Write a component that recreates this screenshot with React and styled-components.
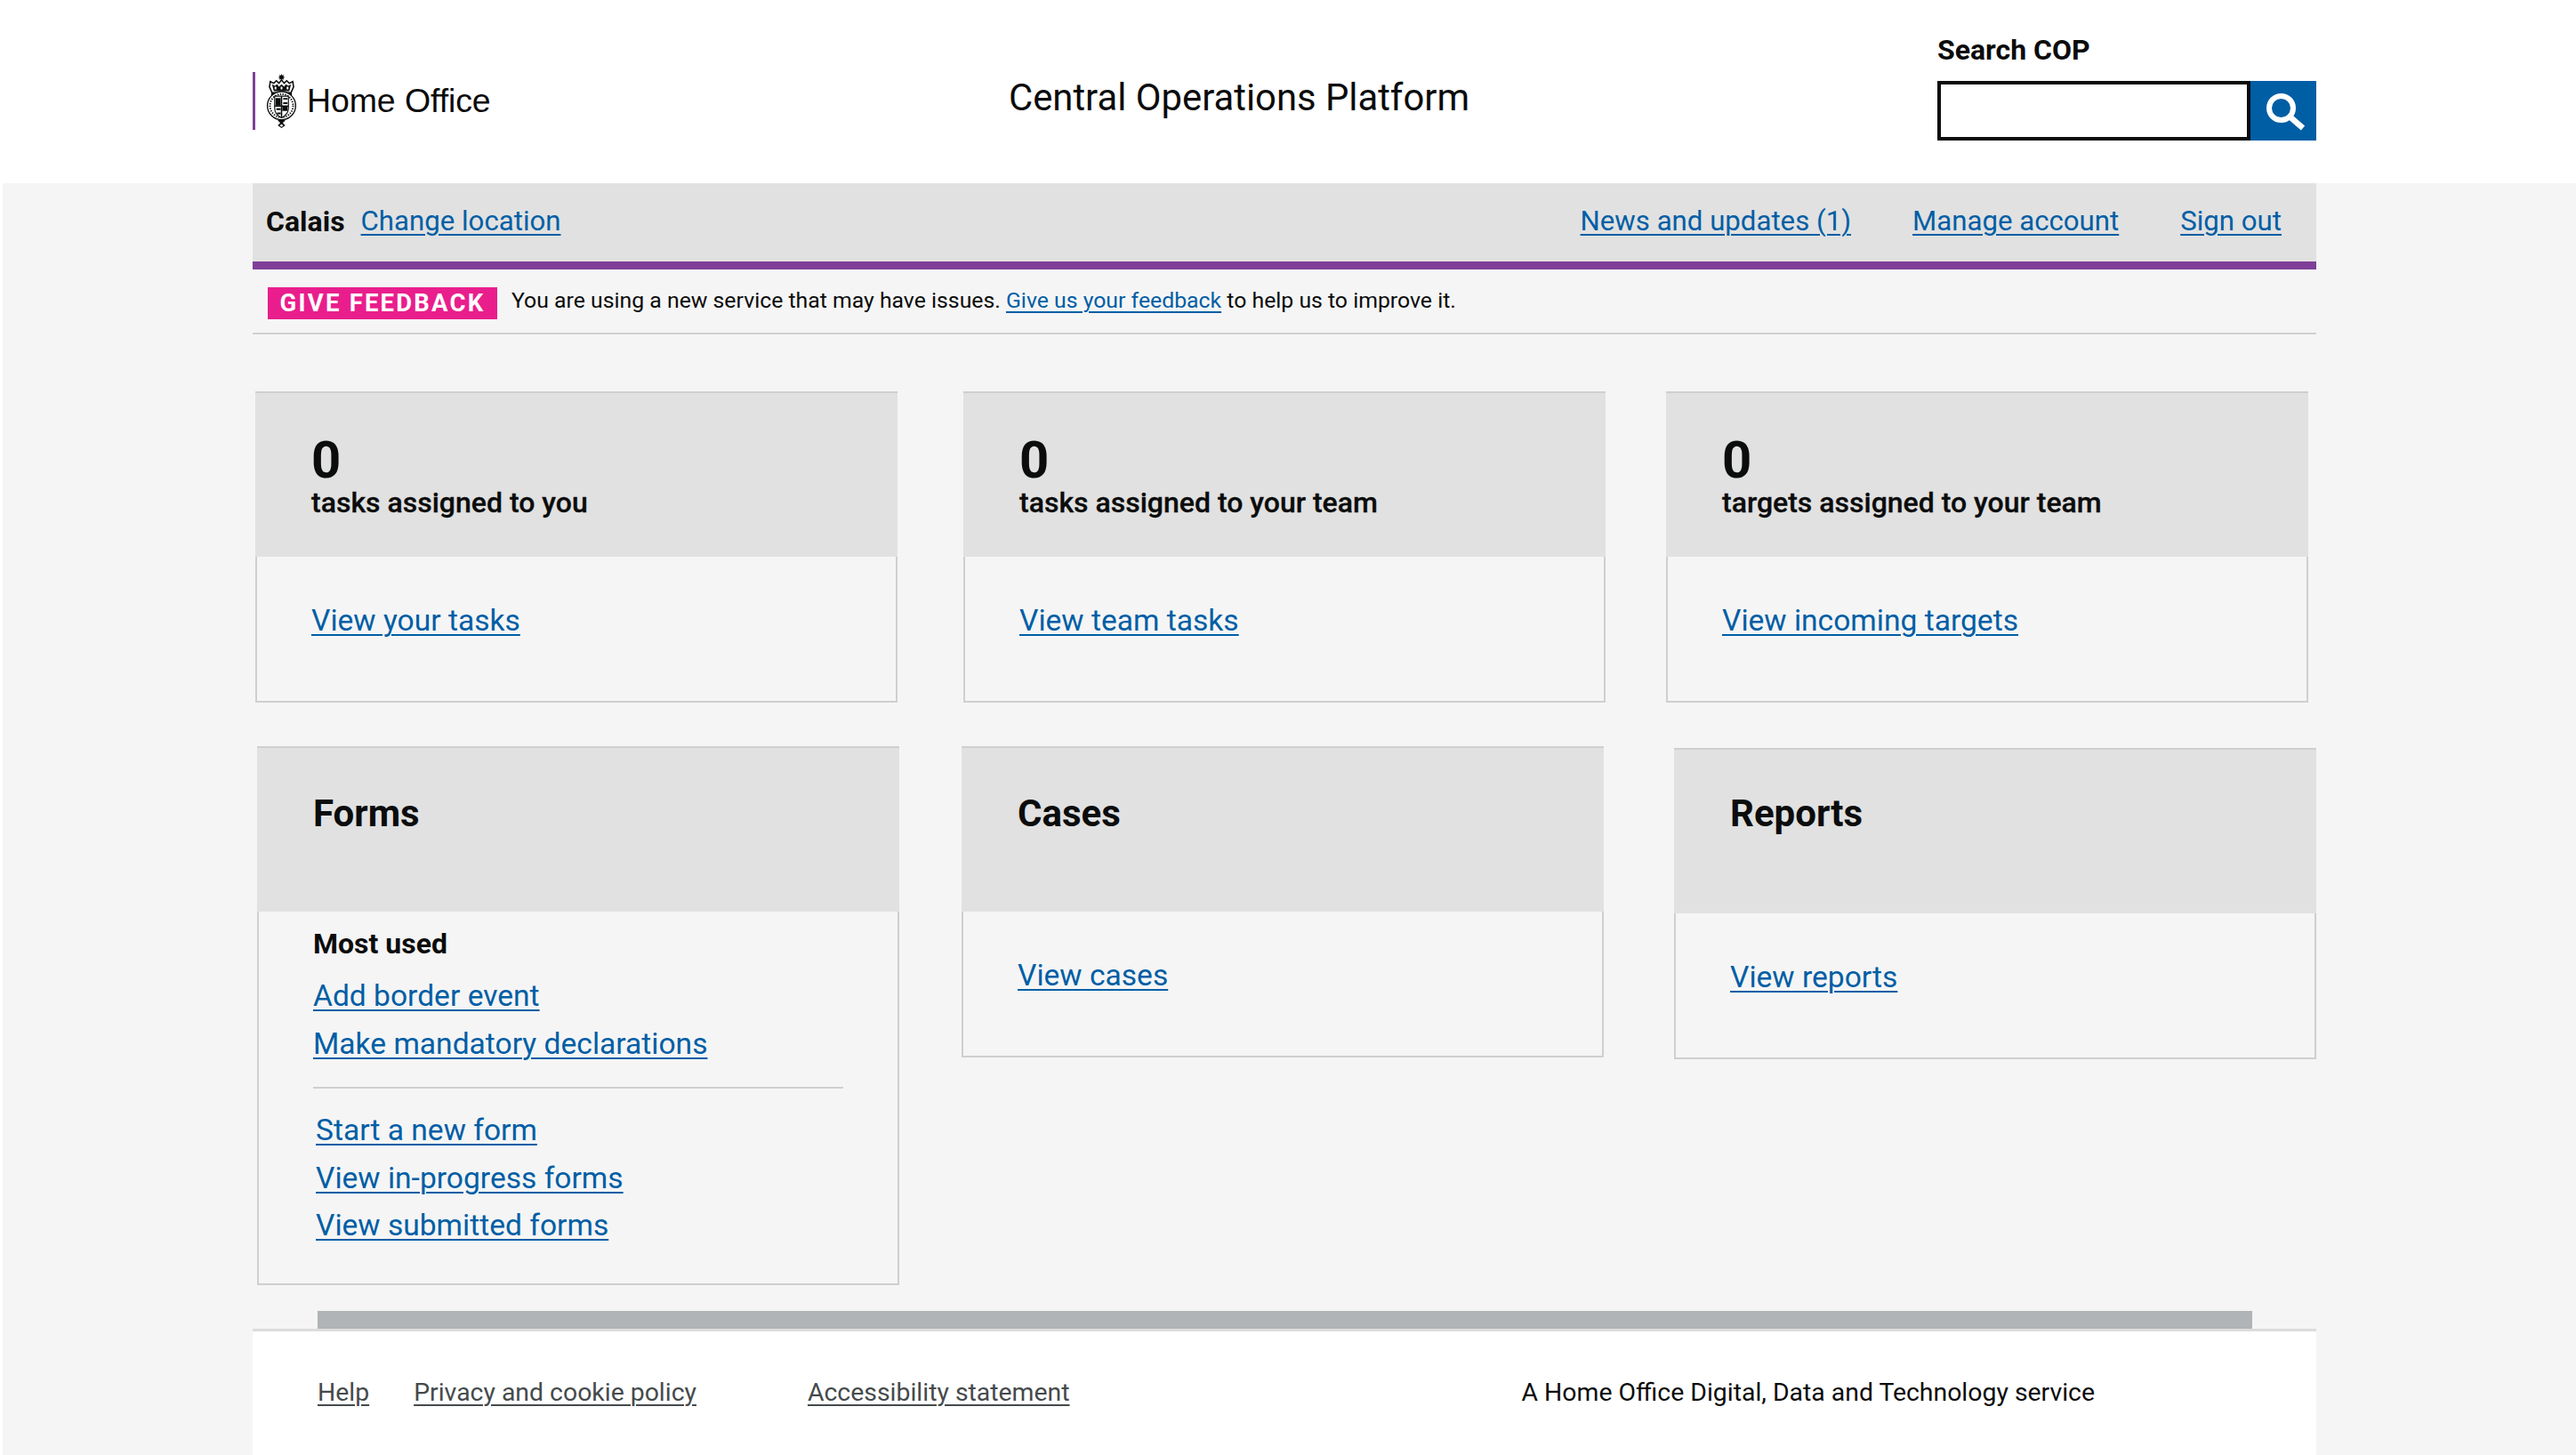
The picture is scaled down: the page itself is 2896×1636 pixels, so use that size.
import React from "react";
import styled, { createGlobalStyle } from "styled-components";

const Global = createGlobalStyle`
  html, body { margin: 0; padding: 0; background: #fff; }
  body { font-family: Roboto, "Liberation Sans", sans-serif; color: #0b0c0c; }
  * { box-sizing: border-box; }
`;
const Page = styled.div`
  width: 2896px; height: 1636px; overflow: hidden; display: flex; flex-direction: column;
`;
const Header = styled.header`
  height: 206px; width: 2320px; margin-left: 284px; display: flex; align-items: flex-start; flex: none;
`;
const Logo = styled.div`
  width: 850px; height: 65px; margin-top: 81px; display: flex; align-items: center;
  border-left: 3px solid #7f3f98; padding-left: 11px;
`;
const Crest = styled.svg`
  width: 37px; height: 62px; flex: none;
`;
const LogoText = styled.span`
  font-family: "Liberation Sans", Arial, sans-serif; font-size: 37.5px; margin-left: 10px; color: #0b0c0c; letter-spacing: -0.1px;
`;
const Title = styled.div`
  font-size: 41.8px; line-height: 56px; margin-top: 82px; color: #0b0c0c;
`;
const Search = styled.form`
  margin-left: auto; width: 426px; padding-top: 36px;
`;
const SearchLabel = styled.label`
  display: block; font-size: 32px; font-weight: 700; line-height: 40px; margin-bottom: 15px;
`;
const SearchRow = styled.div`
  display: flex; height: 67px;
`;
const SearchInput = styled.input`
  width: 352px; height: 67px; border: 4px solid #0b0c0c; background: #fff; padding: 0; outline: 0; border-radius: 0;
`;
const SearchButton = styled.button`
  width: 74px; height: 67px; background: #005ea5; border: 0; padding: 0; display: flex; align-items: center; justify-content: center;
`;
const Body = styled.div`
  flex: 1; margin-left: 3px; padding-left: 281px; background: #f5f5f5; display: flex; flex-direction: column;
`;
const Column = styled.div`
  width: 2320px; flex: 1; display: flex; flex-direction: column;
`;
const Nav = styled.nav`
  height: 97px; background: #e1e1e1; border-bottom: 9px solid #7f3f98; display: flex; align-items: center; padding: 0 39px 3px 15px; flex: none;
`;
const Location = styled.strong`
  font-weight: 700; font-size: 32px; margin-right: 18px;
`;
const Link = styled.a`
  color: #005ea5; text-decoration: underline; text-decoration-thickness: 2px; text-underline-offset: 4px; font-size: ${p => p.$size || 33.6}px; font-weight: 400;
`;
const NavLinks = styled.div`
  margin-left: auto; display: flex; gap: 69px;
`;
const Feedback = styled.div`
  height: 73px; border-bottom: 2px solid #d0d0d0; padding: 20px 0 0 17px; display: flex; align-items: flex-start; flex: none;
`;
const Tag = styled.span`
  background: #e91e8c; color: #fff; font-weight: 700; font-size: 27.5px; height: 36px; width: 258px; padding-bottom: 2px; letter-spacing: 2.2px; display: flex; align-items: center; justify-content: center; margin-right: 16px; flex: none;
`;
const FeedbackText = styled.p`
  margin: 0; font-size: 24.8px; line-height: 30px;
`;
const Main = styled.main`
  flex: 1; padding-top: 64px; display: flex; flex-direction: column;
`;
const Row = styled.div`
  display: flex; align-items: flex-start; padding-left: ${p => p.$left}px; margin-bottom: ${p => p.$bottom}px;
`;
const Card = styled.section`
  width: 722px; height: ${p => p.$height}px; border: 2px solid #cfcfcf; flex: none; margin-right: ${p => p.$gap || 0}px; margin-top: ${p => p.$top || 0}px; display: flex; flex-direction: column;
`;
const CardHead = styled.div`
  height: 184px; background: #e1e1e1; margin: 0 -2px; padding: ${p => p.$pad}px 0 0 63px; flex: none;
`;
const Count = styled.div`
  font-size: 58px; font-weight: 700; line-height: 60px;
`;
const CountLabel = styled.div`
  font-size: 32px; font-weight: 500; line-height: 36px; -webkit-text-stroke: 0.3px #0b0c0c;
`;
const CardTitle = styled.h2`
  margin: 0; font-size: 42px; font-weight: 700; line-height: 56px;
`;
const CardBody = styled.div`
  padding: ${p => p.$pad}px 0 0 61px; display: flex; flex-direction: column; align-items: flex-start;
`;
const SingleLink = styled(Link)`
  line-height: 40px;
`;
const SubHead = styled.div`
  font-size: 32px; font-weight: 700; line-height: 40px; margin-bottom: 12px;
`;
const LinkList = styled.div`
  display: flex; flex-direction: column; align-items: flex-start; padding-left: ${p => p.$indent || 0}px;
`;
const ListLink = styled(Link)`
  line-height: 53.5px;
`;
const Divider = styled.hr`
  width: 596px; height: 2px; background: #cfcfcf; border: 0; margin: 22px 0 20px;
`;
const Scrollbar = styled.div`
  height: 20px; background: #b1b4b6; margin: auto 72px 0 73px; flex: none;
`;
const Footer = styled.footer`
  height: 142px; background: #fff; border-top: 3px solid #dcdcdc; display: flex; align-items: center; padding: 0 0 3px 73px; flex: none;
`;
const FooterLink = styled.a`
  color: #454a4c; text-decoration: underline; text-decoration-thickness: 2px; text-underline-offset: 4px; font-size: 28.4px; margin-left: ${p => p.$ml || 0}px;
`;
const FooterNote = styled.span`
  margin-left: 508px; font-size: 28.4px; color: #0b0c0c;
`;

const CrestIcon = () => (
  <Crest viewBox="0 0 36 64" aria-hidden="true">
    <path d="M18 0l1 2 2-1-1 2 2 1-2 1 1 2-2-1-1 2-1-2-2 1 1-2-2-1 2-1-1-2 2 1z" fill="#0b0c0c" />
    <path d="M5 9l4 2 3-3 3 3 3-4 3 4 3-3 3 3 4-2 1 6-3 7H7l-3-7z" fill="#fff" stroke="#0b0c0c" strokeWidth="1.6" />
    <path d="M7 12l3 2 3-2 2 3 3-3 3 3 2-3 3 2 3-2-2 8H9z" fill="#0b0c0c" />
    <path d="M10 15h2v3h-2zM17 15h2v3h-2zM24 15h2v3h-2z" fill="#fff" />
    <path d="M6 22h24v3H6z" fill="#0b0c0c" />
    <circle cx="18" cy="37" r="16.4" fill="#fff" stroke="#0b0c0c" strokeWidth="1.4" />
    <circle cx="18" cy="37" r="13.4" fill="none" stroke="#0b0c0c" strokeWidth="2" strokeDasharray="1.4 1.5" />
    <path d="M10 26h16v14c0 6-4 9-8 11-4-2-8-5-8-11z" fill="#fff" stroke="#0b0c0c" strokeWidth="1.2" />
    <path d="M11 28h6v9h-6zM19 38h6v5h-6zM20 28h5v2h-5zM20 33h5v2h-5zM12 40h5v2h-5zM13 45h4v2h-4z" fill="#0b0c0c" />
    <path d="M18 26v25M10 37.5h16" stroke="#0b0c0c" strokeWidth="1.6" />
    <path d="M14 53h8v2l-2 1v2l2 1v1l-4 3-4-3v-1l2-1v-2l-2-1z" fill="#0b0c0c" />
    <circle cx="18" cy="60" r="1.4" fill="#fff" />
  </Crest>
);

const SearchIcon = () => (
  <svg width="50" height="46" viewBox="0 0 50 46" aria-hidden="true">
    <circle cx="22.5" cy="19.5" r="13.5" fill="none" stroke="#fff" strokeWidth="6" />
    <path d="M32 29l15 13" stroke="#fff" strokeWidth="6.5" fill="none" />
  </svg>
);

export default function App() {
  return (
    <Page>
      <Global />
      <Header>
        <Logo>
          <CrestIcon />
          <LogoText>Home Office</LogoText>
        </Logo>
        <Title>Central Operations Platform</Title>
        <Search onSubmit={e => e.preventDefault()}>
          <SearchLabel htmlFor="search">Search COP</SearchLabel>
          <SearchRow>
            <SearchInput id="search" />
            <SearchButton type="button" aria-label="Search"><SearchIcon /></SearchButton>
          </SearchRow>
        </Search>
      </Header>
      <Body>
        <Column>
          <Nav>
            <Location>Calais</Location>
            <Link $size={31.2}>Change location</Link>
            <NavLinks>
              <Link $size={31.2}>News and updates (1)</Link>
              <Link $size={31.2}>Manage account</Link>
              <Link $size={31.2}>Sign out</Link>
            </NavLinks>
          </Nav>
          <Feedback>
            <Tag>GIVE FEEDBACK</Tag>
            <FeedbackText>
              You are using a new service that may have issues. <Link $size={24.8}>Give us your feedback</Link> to help us to improve it.
            </FeedbackText>
          </Feedback>
          <Main>
            <Row $left={3} $bottom={49}>
              <Card $height={350} $gap={74}>
                <CardHead $pad={45}><Count>0</Count><CountLabel>tasks assigned to you</CountLabel></CardHead>
                <CardBody $pad={52}><SingleLink>View your tasks</SingleLink></CardBody>
              </Card>
              <Card $height={350} $gap={68}>
                <CardHead $pad={45}><Count>0</Count><CountLabel>tasks assigned to your team</CountLabel></CardHead>
                <CardBody $pad={52}><SingleLink>View team tasks</SingleLink></CardBody>
              </Card>
              <Card $height={350}>
                <CardHead $pad={45}><Count>0</Count><CountLabel>targets assigned to your team</CountLabel></CardHead>
                <CardBody $pad={52}><SingleLink>View incoming targets</SingleLink></CardBody>
              </Card>
            </Row>
            <Row $left={5} $bottom={0}>
              <Card $height={606} $gap={70}>
                <CardHead $pad={46}><CardTitle>Forms</CardTitle></CardHead>
                <CardBody $pad={16}>
                  <SubHead>Most used</SubHead>
                  <LinkList>
                    <ListLink>Add border event</ListLink>
                    <ListLink>Make mandatory declarations</ListLink>
                  </LinkList>
                  <Divider />
                  <LinkList $indent={3}>
                    <ListLink>Start a new form</ListLink>
                    <ListLink>View in-progress forms</ListLink>
                    <ListLink>View submitted forms</ListLink>
                  </LinkList>
                </CardBody>
              </Card>
              <Card $height={350} $gap={79}>
                <CardHead $pad={46}><CardTitle>Cases</CardTitle></CardHead>
                <CardBody $pad={52}><SingleLink>View cases</SingleLink></CardBody>
              </Card>
              <Card $height={350} $top={2}>
                <CardHead $pad={44}><CardTitle>Reports</CardTitle></CardHead>
                <CardBody $pad={52}><SingleLink>View reports</SingleLink></CardBody>
              </Card>
            </Row>
            <Scrollbar />
          </Main>
          <Footer>
            <FooterLink>Help</FooterLink>
            <FooterLink $ml={50}>Privacy and cookie policy</FooterLink>
            <FooterLink $ml={125}>Accessibility statement</FooterLink>
            <FooterNote>A Home Office Digital, Data and Technology service</FooterNote>
          </Footer>
        </Column>
      </Body>
    </Page>
  );
}
